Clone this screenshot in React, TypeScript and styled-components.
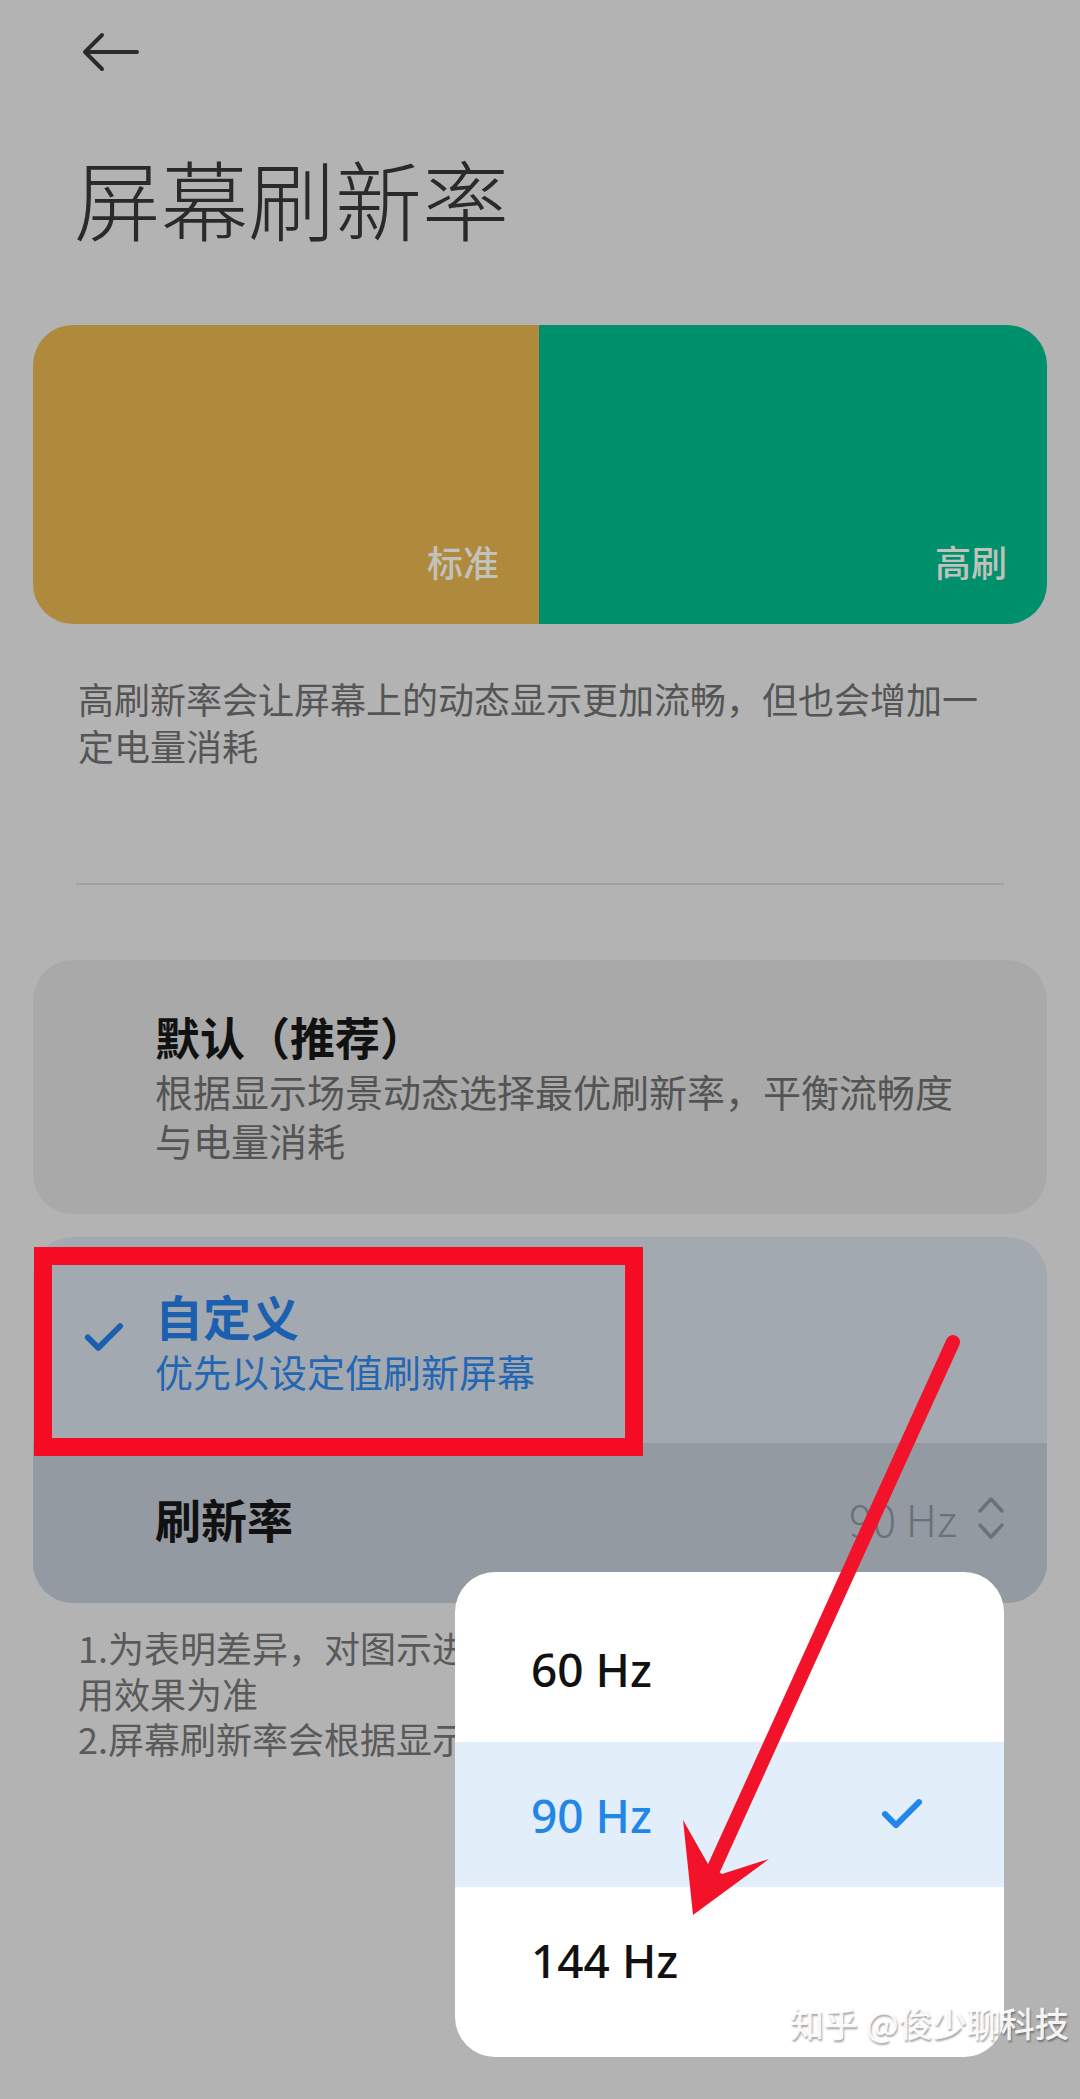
import React from 'react';
import styled, { createGlobalStyle } from 'styled-components';

const GlobalStyle = createGlobalStyle`
  html, body {
    margin: 0;
    padding: 0;
    background: #b3b3b3;
  }
  body {
    font-family: "Noto Sans CJK SC", "Noto Sans", sans-serif;
  }
`;

const Page = styled.div`
  position: relative;
  width: 1080px;
  height: 2099px;
  overflow: hidden;
  background: #b3b3b3;
  box-sizing: border-box;
  padding-top: 30px;
`;

const BackButton = styled.div`
  margin-left: 80px;
  width: 60px;
  height: 46px;
  display: flex;
  align-items: center;
`;

const Title = styled.h1`
  margin: 66px 0 0 74px;
  font-size: 87px;
  line-height: 110px;
  font-weight: 300;
  color: #2a2a2a;
`;

const ColorCard = styled.div`
  margin: 73px 33px 0;
  height: 299px;
  border-radius: 40px;
  overflow: hidden;
  display: flex;
`;

const ColorHalf = styled.div<{ $bg: string; $w?: string }>`
  flex: ${(p) => (p.$w ? `0 0 ${p.$w}` : '1')};
  background: ${(p) => p.$bg};
  display: flex;
  align-items: flex-end;
  justify-content: flex-end;
  padding: 0 40px 38px 0;
  box-sizing: border-box;
`;

const HalfLabel = styled.span`
  font-size: 36px;
  line-height: 50px;
  font-weight: 500;
  color: #c2c2bd;
`;

const Desc = styled.div`
  margin: 51px 40px 0 78px;
  font-size: 36px;
  line-height: 47px;
  color: #555555;
`;

const Line = styled.div`
  white-space: nowrap;
`;

const Divider = styled.div`
  margin: 114px 76px 0;
  height: 2px;
  background: #a1a1a1;
`;

const OptionCard = styled.div<{ $bg: string }>`
  margin: 0 33px;
  border-radius: 40px;
  overflow: hidden;
  background: ${(p) => p.$bg};
`;

const DefaultCard = styled(OptionCard)`
  margin-top: 75px;
  height: 254px;
  padding: 48px 30px 0 122px;
  box-sizing: border-box;
`;

const CustomCard = styled(OptionCard)`
  margin-top: 23px;
`;

const OptionTitle = styled.div<{ $blue?: boolean }>`
  font-size: ${(p) => (p.$blue ? '48px' : '45px')};
  line-height: 58px;
  font-weight: 700;
  color: ${(p) => (p.$blue ? '#1c5fae' : '#111111')};
`;

const OptionSub = styled.div<{ $blue?: boolean }>`
  font-size: 38px;
  line-height: 49px;
  color: ${(p) => (p.$blue ? '#2566b3' : '#545454')};
  margin-top: ${(p) => (p.$blue ? '2px' : '0')};
`;

const CustomTop = styled.div`
  height: 206px;
  display: flex;
  align-items: center;
  padding-left: 50px;
  box-sizing: border-box;
`;

const CheckSlot = styled.div`
  width: 72px;
  display: flex;
  align-items: center;
  padding-bottom: 6px;
`;

const RateRow = styled.div`
  height: 160px;
  background: #939aa1;
  display: flex;
  align-items: center;
  justify-content: space-between;
  padding: 0 42px 10px 122px;
  box-sizing: border-box;
`;

const RateLabel = styled.div`
  font-size: 46px;
  font-weight: 700;
  color: #111111;
`;

const RateValue = styled.div`
  display: flex;
  align-items: center;
  gap: 20px;
  font-size: 44px;
  font-weight: 300;
  color: #6b7178;
`;

const Footnote = styled.div`
  margin: 22px 40px 0 78px;
  font-size: 36px;
  line-height: 45.5px;
  color: #5a5a5a;
`;

const Popup = styled.div`
  position: absolute;
  left: 455px;
  top: 1572px;
  width: 549px;
  height: 485px;
  border-radius: 40px;
  background: #ffffff;
  padding: 24px 0;
  box-sizing: border-box;
  display: flex;
  flex-direction: column;
`;

const PopupItem = styled.div<{ $active?: boolean }>`
  height: 146px;
  display: flex;
  align-items: center;
  justify-content: space-between;
  padding: 0 80px 0 76px;
  background: ${(p) => (p.$active ? '#e3eefb' : 'transparent')};
  font-size: 46px;
  font-weight: 500;
  color: ${(p) => (p.$active ? '#2286e8' : '#111111')};
  font-family: "Noto Sans", "Noto Sans CJK SC", sans-serif;
`;

const RedBox = styled.div`
  position: absolute;
  left: 34px;
  top: 1247px;
  width: 609px;
  height: 209px;
  border: 18px solid #f50b24;
  box-sizing: border-box;
`;

const Overlay = styled.svg`
  position: absolute;
  left: 0;
  top: 0;
  pointer-events: none;
`;

const Watermark = styled.div`
  position: absolute;
  left: 790px;
  top: 1998px;
  font-size: 34px;
  line-height: 50px;
  font-weight: 500;
  color: rgba(255, 255, 255, 0.92);
  text-shadow: 1px 2px 2px rgba(0, 0, 0, 0.35);
  white-space: nowrap;
`;

const BackArrow = () => (
  <svg width="60" height="46" viewBox="0 0 60 46">
    <path
      d="M57 22H6M22 5L5 22l17 17"
      fill="none"
      stroke="#2b2b2b"
      strokeWidth="4"
      strokeLinecap="round"
      strokeLinejoin="round"
    />
  </svg>
);

const Check = ({ color, size }: { color: string; size: number }) => (
  <svg width={size} height={size * 0.78} viewBox="0 0 44 34">
    <path
      d="M5 17l11 11L39 5"
      fill="none"
      stroke={color}
      strokeWidth="6"
      strokeLinecap="round"
      strokeLinejoin="round"
    />
  </svg>
);

const UpDown = () => (
  <svg width="28" height="46" viewBox="0 0 28 46">
    <path
      d="M3 16L14 4l11 12M3 30l11 12 11-12"
      fill="none"
      stroke="#6b7178"
      strokeWidth="3.5"
      strokeLinecap="round"
      strokeLinejoin="round"
    />
  </svg>
);

export default function App() {
  return (
    <>
      <GlobalStyle />
      <Page>
        <BackButton>
          <BackArrow />
        </BackButton>
        <Title>屏幕刷新率</Title>

        <ColorCard>
          <ColorHalf $bg="#b08a3c" $w="506px">
            <HalfLabel>标准</HalfLabel>
          </ColorHalf>
          <ColorHalf $bg="#00906c">
            <HalfLabel>高刷</HalfLabel>
          </ColorHalf>
        </ColorCard>

        <Desc>
          <Line>高刷新率会让屏幕上的动态显示更加流畅，但也会增加一</Line>
          <Line>定电量消耗</Line>
        </Desc>

        <Divider />

        <DefaultCard $bg="#a9a9a9">
          <OptionTitle>默认（推荐）</OptionTitle>
          <OptionSub>
            <Line>根据显示场景动态选择最优刷新率，平衡流畅度</Line>
            <Line>与电量消耗</Line>
          </OptionSub>
        </DefaultCard>

        <CustomCard $bg="#a2a9b0">
          <CustomTop>
            <CheckSlot>
              <Check color="#1c5fae" size={42} />
            </CheckSlot>
            <div>
              <OptionTitle $blue>自定义</OptionTitle>
              <OptionSub $blue>优先以设定值刷新屏幕</OptionSub>
            </div>
          </CustomTop>
          <RateRow>
            <RateLabel>刷新率</RateLabel>
            <RateValue>
              <span>90 Hz</span>
              <UpDown />
            </RateValue>
          </RateRow>
        </CustomCard>

        <Footnote>
          <Line>1.为表明差异，对图示进行了模拟处理，实际以使</Line>
          <Line>用效果为准</Line>
          <Line>2.屏幕刷新率会根据显示内容自动调节</Line>
        </Footnote>

        <Popup>
          <PopupItem>60 Hz</PopupItem>
          <PopupItem $active>
            <span>90 Hz</span>
            <Check color="#2187ec" size={44} />
          </PopupItem>
          <PopupItem>144 Hz</PopupItem>
        </Popup>

        <RedBox />

        <Overlay width="1080" height="2099" viewBox="0 0 1080 2099">
          <line x1="953" y1="1342" x2="714" y2="1868" stroke="#f2132b" strokeWidth="14" strokeLinecap="round" />
          <polygon points="683,1820 708,1864 722,1874 769,1859 693,1915" fill="#f2132b" />
        </Overlay>

        <Watermark>知乎 @俊少聊科技</Watermark>
      </Page>
    </>
  );
}
